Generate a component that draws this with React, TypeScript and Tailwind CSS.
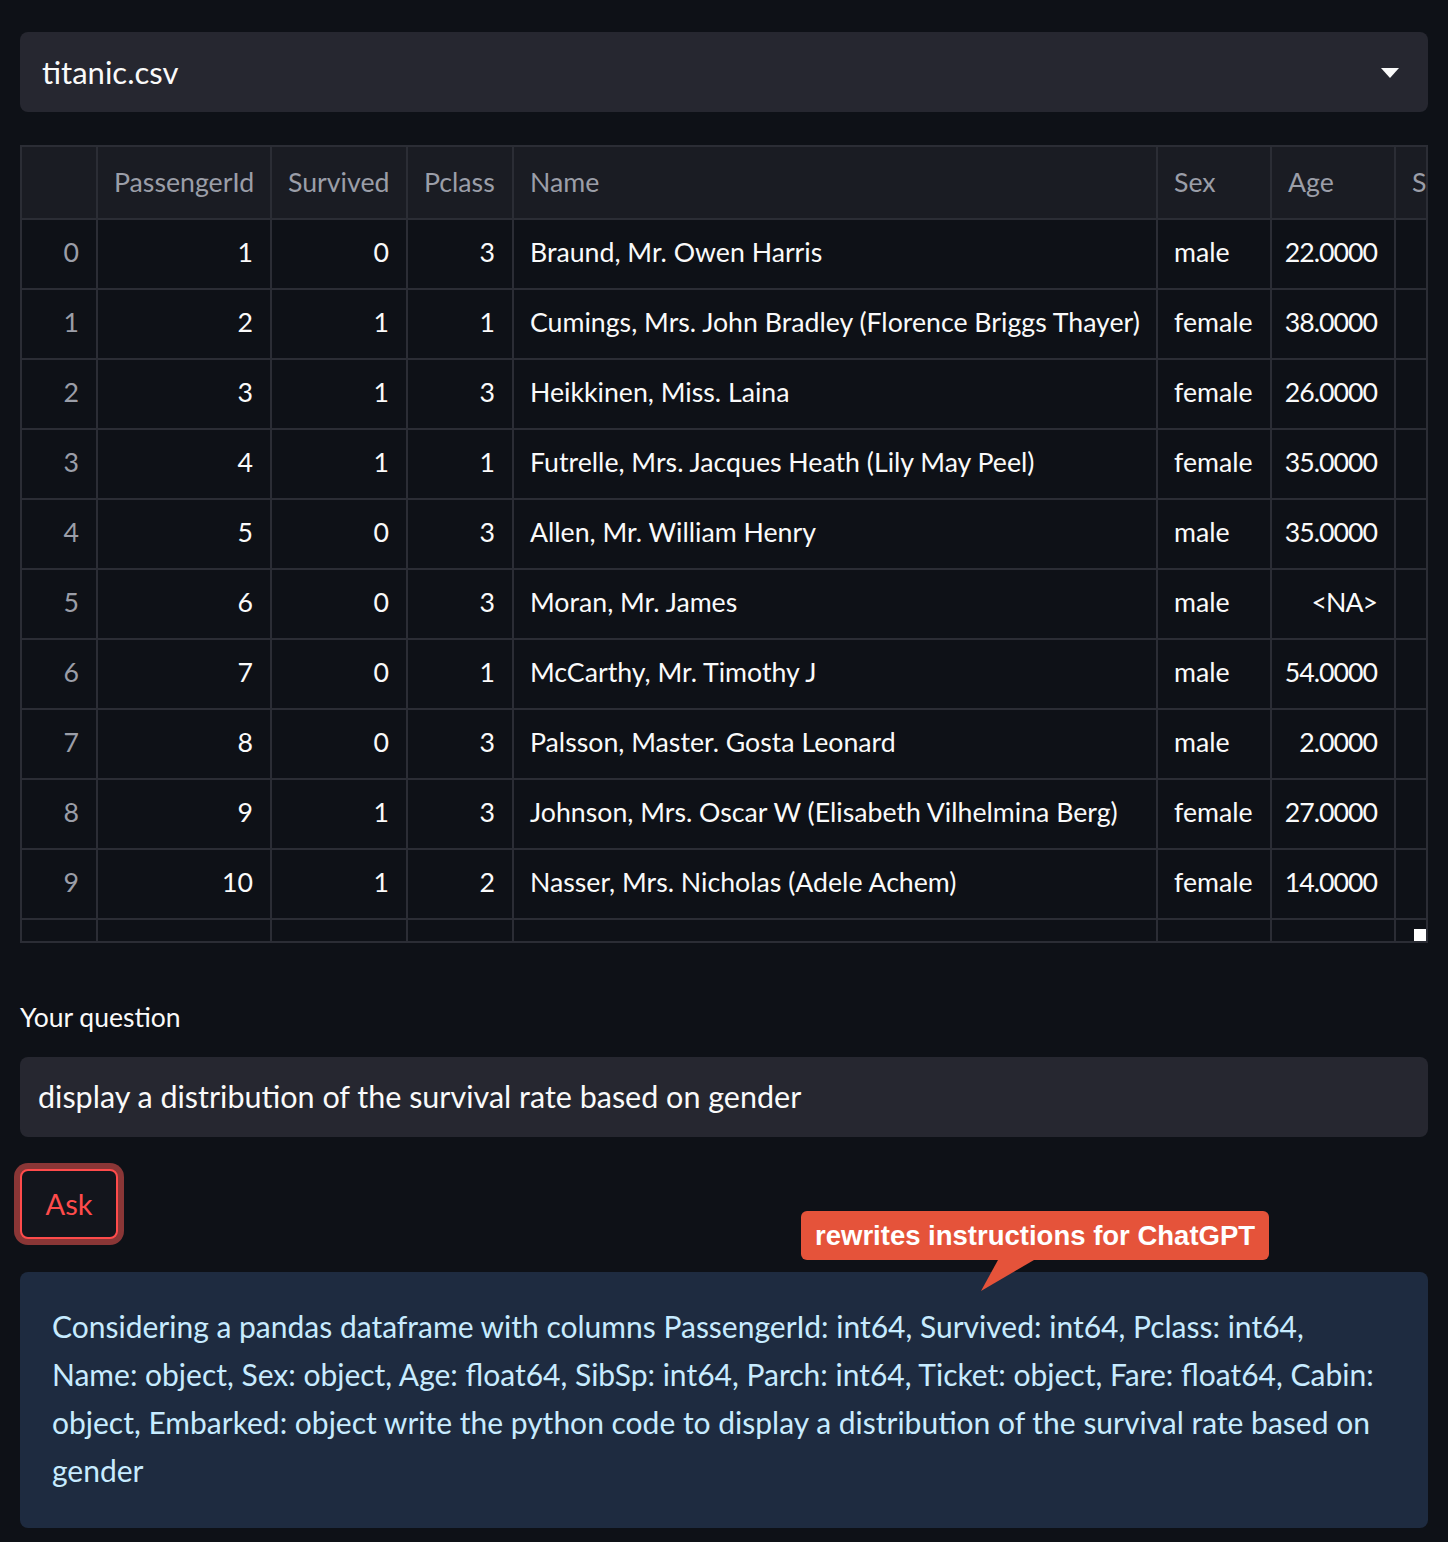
const rows = [
  [0, 1, 0, 3, "Braund, Mr. Owen Harris", "male", "22.0000", 1],
  [1, 2, 1, 1, "Cumings, Mrs. John Bradley (Florence Briggs Thayer)", "female", "38.0000", 1],
  [2, 3, 1, 3, "Heikkinen, Miss. Laina", "female", "26.0000", 0],
  [3, 4, 1, 1, "Futrelle, Mrs. Jacques Heath (Lily May Peel)", "female", "35.0000", 1],
  [4, 5, 0, 3, "Allen, Mr. William Henry", "male", "35.0000", 0],
  [5, 6, 0, 3, "Moran, Mr. James", "male", "<NA>", 0],
  [6, 7, 0, 1, "McCarthy, Mr. Timothy J", "male", "54.0000", 0],
  [7, 8, 0, 3, "Palsson, Master. Gosta Leonard", "male", "2.0000", 3],
  [8, 9, 1, 3, "Johnson, Mrs. Oscar W (Elisabeth Vilhelmina Berg)", "female", "27.0000", 0],
  [9, 10, 1, 2, "Nasser, Mrs. Nicholas (Adele Achem)", "female", "14.0000", 1],
  [10, 11, 1, 3, "Sandstrom, Miss. Marguerite Rut", "female", "4.0000", 1],
];

const font = { fontFamily: "Lato, 'Noto Sans', sans-serif" };

export default function App() {
  const cell = "border-2 border-[#2b2d35] px-4 pb-1 h-[70px] whitespace-nowrap";
  const num = "border-2 border-[#2b2d35] pl-0 pr-[17px] pb-1 h-[70px] whitespace-nowrap text-right";
  const head = "border-2 border-[#2b2d35] px-4 h-[73px] whitespace-nowrap text-left font-normal";
  return (
    <div className="min-h-screen bg-[#0e1117] text-[#fafafa] px-5 pt-8" style={font}>
      {/* file select */}
      <div className="flex h-20 items-center justify-between rounded-lg bg-[#262730] pl-[22px] pr-7">
        <span className="text-[31px]">titanic.csv</span>
        <svg width="20" height="12" viewBox="0 0 20 12" className="mt-0.5">
          <path d="M1 1h18l-9 10z" fill="#fafafa" />
        </svg>
      </div>

      {/* dataframe */}
      <div className="relative mt-[33px] h-[798px] w-full overflow-hidden border-2 border-[#2b2d35]">
        <table className="-m-[2px] table-fixed border-collapse text-[26.7px]" style={{ width: 1500 }}>
          <colgroup>
            <col style={{ width: 76 }} />
            <col style={{ width: 174 }} />
            <col style={{ width: 136 }} />
            <col style={{ width: 106 }} />
            <col style={{ width: 644 }} />
            <col style={{ width: 114 }} />
            <col style={{ width: 124 }} />
            <col style={{ width: 126 }} />
          </colgroup>
          <thead>
            <tr className="bg-[#1a1c23] text-[#9b9ea8]">
              <th className={head}></th>
              <th className={head}>PassengerId</th>
              <th className={head}>Survived</th>
              <th className={head}>Pclass</th>
              <th className={head}>Name</th>
              <th className={head}>Sex</th>
              <th className={head}>Age</th>
              <th className={head}>SibSp</th>
            </tr>
          </thead>
          <tbody>
            {rows.map((r) => (
              <tr key={r[0] as number}>
                <td className={`${num} text-[#9b9ea8]`}>{r[0]}</td>
                <td className={num}>{r[1]}</td>
                <td className={num}>{r[2]}</td>
                <td className={num}>{r[3]}</td>
                <td className={cell}>{r[4]}</td>
                <td className={cell}>{r[5]}</td>
                <td className={`${num} tracking-[-1px]`}>{r[6]}</td>
                <td className={num}>{r[7]}</td>
              </tr>
            ))}
          </tbody>
        </table>
        <div className="absolute bottom-0 right-0 h-3 w-3 bg-white" />
      </div>

      {/* question */}
      <div className="mt-[55px] text-[26.5px]">Your question</div>
      <div className="mt-[19px] flex h-20 items-center rounded-lg bg-[#262730] px-[18px] text-[30.5px]">
        display a distribution of the survival rate based on gender
      </div>

      <div className="mt-[26px] flex">
        <button className="-ml-1.5 rounded-[14px] bg-[#8a3636] p-1.5">
          <span className="flex h-[70px] w-[98px] items-center justify-center rounded-lg border-2 border-[#ff4b4b] bg-[#13151c] text-[29px] text-[#ff4b4b]">
            Ask
          </span>
        </button>
      </div>

      {/* annotated info box */}
      <div className="relative mt-[27px]">
        <div
          className="absolute -top-[61px] left-[781px] z-10 rounded-md bg-[#e5533a] px-[14px] py-1 text-[27.5px] font-bold text-white"
          style={{ fontFamily: "'Liberation Sans', Arial, sans-serif" }}
        >
          rewrites instructions for ChatGPT
          <svg className="absolute left-[180px] top-full" width="54" height="32" viewBox="0 0 54 32">
            <path d="M17 0h36L0 31z" fill="#e5533a" />
          </svg>
        </div>
        <div className="rounded-lg bg-[#1e2b40] px-8 pb-[34px] pt-[30px] text-[30px] leading-[48px] text-[#c7ebff]">
          Considering a pandas dataframe with columns PassengerId: int64, Survived: int64, Pclass: int64, Name: object, Sex: object, Age: float64, SibSp: int64, Parch: int64, Ticket: object, Fare: float64, Cabin: object, Embarked: object write the python code to display a distribution of the survival rate based on gender
        </div>
      </div>
    </div>
  );
}
